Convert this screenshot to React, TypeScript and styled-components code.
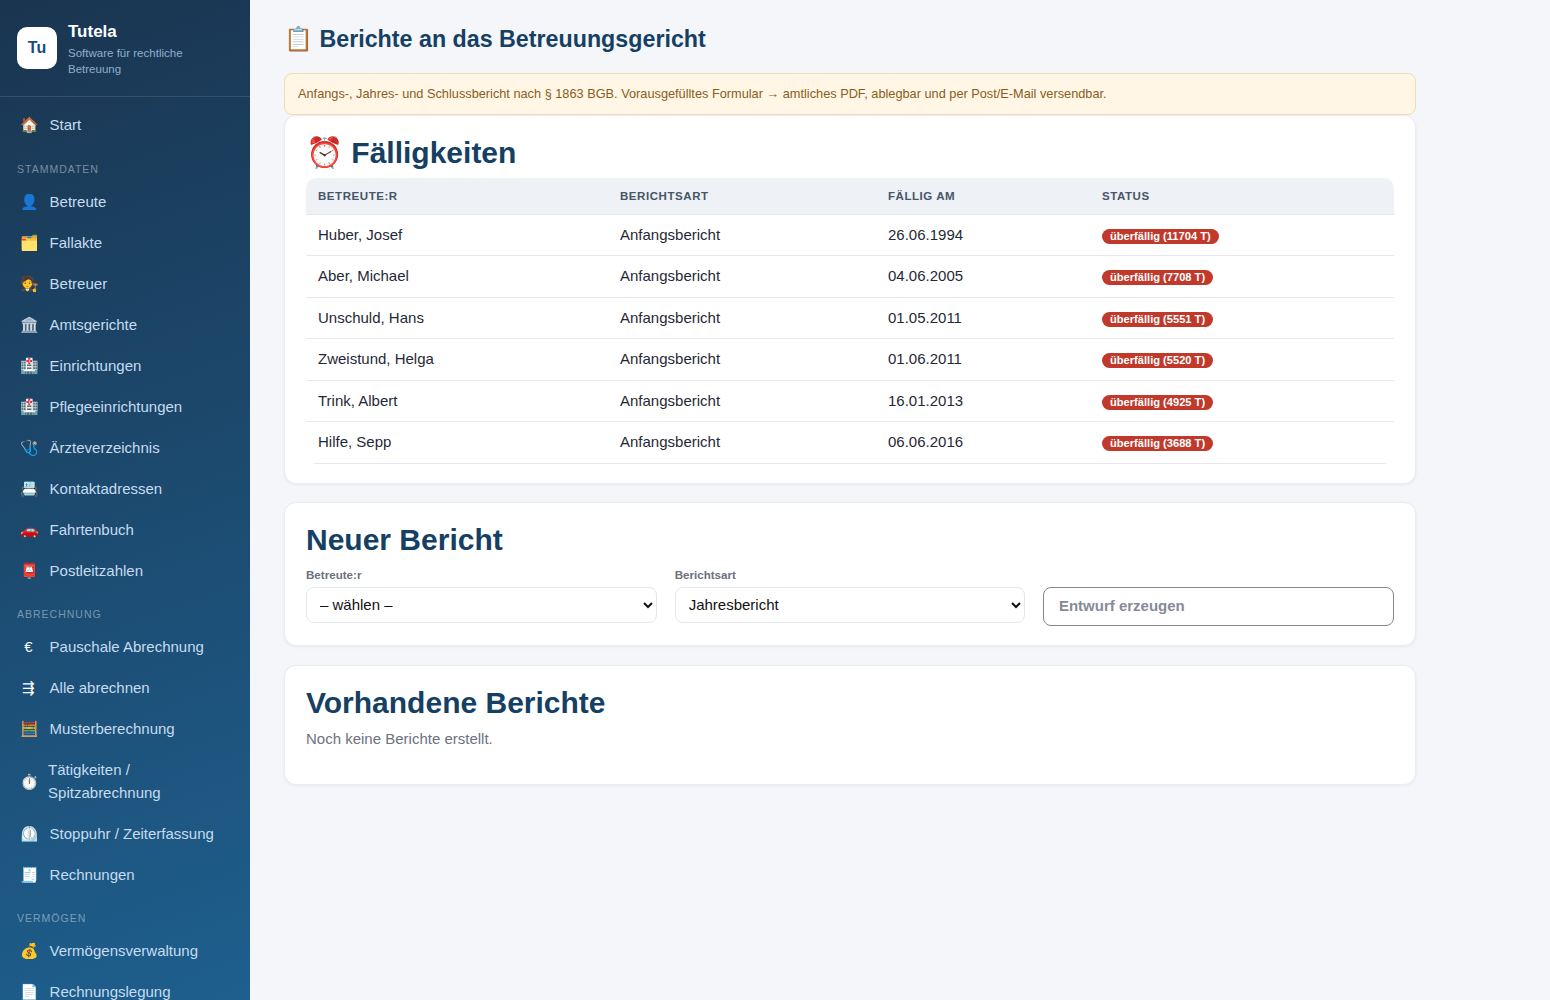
import styled, { createGlobalStyle } from 'styled-components';

const GlobalStyle = createGlobalStyle`
	* {
		box-sizing: border-box;
	}
	html, body {
		margin: 0;
		height: 100%;
		overflow: hidden;
	}
	body {
		font-family: 'Liberation Sans', Arial, sans-serif;
		font-size: 15px;
		line-height: 1.5;
		background: #f4f6fa;
		color: #1f2937;
	}
`;

type NavEntry = { icon: string; label: string };
type NavGroup = { title?: string; items: NavEntry[] };

const navGroups: NavGroup[] = [
	{ items: [{ icon: '🏠', label: 'Start' }] },
	{
		title: 'Stammdaten',
		items: [
			{ icon: '👤', label: 'Betreute' },
			{ icon: '🗂️', label: 'Fallakte' },
			{ icon: '🧑‍⚖️', label: 'Betreuer' },
			{ icon: '🏛️', label: 'Amtsgerichte' },
			{ icon: '🏥', label: 'Einrichtungen' },
			{ icon: '🏥', label: 'Pflegeeinrichtungen' },
			{ icon: '🩺', label: 'Ärzteverzeichnis' },
			{ icon: '📇', label: 'Kontaktadressen' },
			{ icon: '🚗', label: 'Fahrtenbuch' },
			{ icon: '📮', label: 'Postleitzahlen' },
		],
	},
	{
		title: 'Abrechnung',
		items: [
			{ icon: '€', label: 'Pauschale Abrechnung' },
			{ icon: '⇶', label: 'Alle abrechnen' },
			{ icon: '🧮', label: 'Musterberechnung' },
			{ icon: '⏱️', label: 'Tätigkeiten / Spitzabrechnung' },
			{ icon: '⏲️', label: 'Stoppuhr / Zeiterfassung' },
			{ icon: '🧾', label: 'Rechnungen' },
		],
	},
	{
		title: 'Vermögen',
		items: [
			{ icon: '💰', label: 'Vermögensverwaltung' },
			{ icon: '📄', label: 'Rechnungslegung' },
		],
	},
];

const dueRows = [
	{ name: 'Huber, Josef', date: '26.06.1994', days: 11704 },
	{ name: 'Aber, Michael', date: '04.06.2005', days: 7708 },
	{ name: 'Unschuld, Hans', date: '01.05.2011', days: 5551 },
	{ name: 'Zweistund, Helga', date: '01.06.2011', days: 5520 },
	{ name: 'Trink, Albert', date: '16.01.2013', days: 4925 },
	{ name: 'Hilfe, Sepp', date: '06.06.2016', days: 3688 },
];

export default function App() {
	return (
		<>
			<GlobalStyle />
			<Layout>
				<Sidebar>
					<Brand>
						<BrandLogo>Tu</BrandLogo>
						<BrandText>
							<BrandName>Tutela</BrandName>
							<BrandSub>Software für rechtliche Betreuung</BrandSub>
						</BrandText>
					</Brand>
					<Nav>
						{navGroups.map((group, i) => (
							<div key={i}>
								{group.title && <NavTitle>{group.title}</NavTitle>}
								{group.items.map((item) => (
									<NavItem key={item.label}>
										<NavIcon>{item.icon}</NavIcon>
										<span>{item.label}</span>
									</NavItem>
								))}
							</div>
						))}
					</Nav>
				</Sidebar>

				<Main>
					<PageTitle>📋 Berichte an das Betreuungsgericht</PageTitle>
					<Notice>
						Anfangs-, Jahres- und Schlussbericht nach § 1863 BGB. Vorausgefülltes
						Formular → amtliches PDF, ablegbar und per Post/E-Mail versendbar.
					</Notice>

					<DueCard>
						<CardTitle>⏰ Fälligkeiten</CardTitle>
						<TableWrap>
							<DueTable>
								<colgroup>
									<col width="302" />
									<col width="268" />
									<col width="214" />
									<col width="304" />
								</colgroup>
								<thead>
									<tr>
										<th>Betreute:r</th>
										<th>Berichtsart</th>
										<th>Fällig am</th>
										<th>Status</th>
									</tr>
								</thead>
								<tbody>
									{dueRows.map((row) => (
										<tr key={row.name}>
											<td>{row.name}</td>
											<td>Anfangsbericht</td>
											<td>{row.date}</td>
											<td>
												<Badge>überfällig ({row.days} T)</Badge>
											</td>
										</tr>
									))}
								</tbody>
							</DueTable>
						</TableWrap>
					</DueCard>

					<FormCard>
						<CardTitle>Neuer Bericht</CardTitle>
						<FormGrid>
							<Field>
								<FieldLabel>Betreute:r</FieldLabel>
								<Select defaultValue="">
									<option value="">– wählen –</option>
								</Select>
							</Field>
							<Field>
								<FieldLabel>Berichtsart</FieldLabel>
								<Select defaultValue="jahr">
									<option value="anfang">Anfangsbericht</option>
									<option value="jahr">Jahresbericht</option>
									<option value="schluss">Schlussbericht</option>
								</Select>
							</Field>
							<SubmitButton type="button">Entwurf erzeugen</SubmitButton>
						</FormGrid>
					</FormCard>

					<EmptyCard>
						<CardTitle>Vorhandene Berichte</CardTitle>
						<Muted>Noch keine Berichte erstellt.</Muted>
					</EmptyCard>
				</Main>
			</Layout>
		</>
	);
}

const Layout = styled.div`
	display: flex;
	height: 100vh;
	overflow: hidden;
`;

const Sidebar = styled.aside`
	flex: 0 0 250px;
	width: 250px;
	height: 100%;
	overflow: hidden;
	background: linear-gradient(160deg, #1a3550 0%, #1e5f8e 100%);
`;

const Brand = styled.div`
	display: flex;
	align-items: center;
	gap: 11px;
	height: 97px;
	padding: 0 17px;
	border-bottom: 1px solid rgba(255, 255, 255, 0.12);
`;

const BrandLogo = styled.div`
	flex: 0 0 40px;
	height: 42px;
	display: flex;
	align-items: center;
	justify-content: center;
	border-radius: 10px;
	background: #fff;
	color: #1a4d7a;
	font-size: 16px;
	font-weight: 700;
`;

const BrandText = styled.div`
	display: flex;
	flex-direction: column;
	margin-top: 2px;
`;

const BrandName = styled.div`
	color: #fff;
	font-size: 17px;
	font-weight: 700;
	line-height: 22px;
	margin-bottom: 2px;
`;

const BrandSub = styled.div`
	max-width: 130px;
	color: #8fb0cc;
	font-size: 11.52px;
	line-height: 16px;
`;

const Nav = styled.nav`
	padding: 8px 8px 0;
`;

const NavTitle = styled.div`
	padding: 14.5px 9px 5px;
	color: rgba(255, 255, 255, 0.42);
	font-size: 10.5px;
	line-height: 16px;
	letter-spacing: 1px;
	text-transform: uppercase;
`;

const NavItem = styled.div`
	display: flex;
	align-items: center;
	gap: 12.6px;
	padding: 9.25px 13px 9.25px 12px;
	color: #c6dcf0;
	font-size: 15px;
	line-height: 22.5px;
`;

const NavIcon = styled.span`
	width: 17px;
	min-width: 0;
	text-align: center;
	font-size: 15px;
	color: #fff;
`;

const Main = styled.main`
	flex: 1;
	min-width: 0;
	padding: 22px 134px 0 34px;
`;

const PageTitle = styled.h1`
	margin: 0 0 17px;
	color: #153f63;
	font-size: 23.25px;
	line-height: 34px;
	font-weight: 700;
`;

const Notice = styled.div`
	padding: 10px 13px;
	border: 1px solid #f2dcb3;
	border-radius: 8px;
	background: #fff6e6;
	color: #8a5d1a;
	font-size: 12.75px;
	line-height: 20px;
`;

const Card = styled.section`
	margin-bottom: 19px;
	padding: 19px 21px 0;
	border: 1px solid #e8ecf3;
	border-radius: 12px;
	background: #fff;
	box-shadow: 0 1px 3px rgba(20, 40, 70, 0.06);
`;

const DueCard = styled(Card)`
	height: 368.5px;
	margin-bottom: 18.9px;
`;

const FormCard = styled(Card)`
	margin-bottom: 19.4px;
	padding-bottom: 18.8px;
`;

const EmptyCard = styled(Card)`
	height: 120px;
`;

const CardTitle = styled.h2`
	margin: 0 0 7px;
	color: #153f63;
	font-size: 30px;
	line-height: 36px;
	font-weight: 700;
`;

const TableWrap = styled.div`
	overflow: hidden;
	border-radius: 10px;
`;

const DueTable = styled.table`
	width: 100%;
	table-layout: fixed;
	border-collapse: separate;
	border-spacing: 0;

	th {
		padding: 9.5px 12px 8.5px;
		background: #eef1f6;
		border-bottom: 1px solid #e2e6ed;
		color: #475569;
		font-size: 11.52px;
		font-weight: 700;
		line-height: 17.5px;
		letter-spacing: 0.55px;
		text-align: left;
		text-transform: uppercase;
	}
	td {
		padding: 9px 12px;
		border-bottom: 1px solid #e5e8ef;
		color: #1f2937;
		font-size: 15px;
		line-height: 22.5px;
	}
`;

const Badge = styled.span`
	display: inline-block;
	padding: 0 8px;
	border-radius: 999px;
	background: #c0392b;
	color: #fff;
	font-size: 11.12px;
	font-weight: 700;
	line-height: 15px;
`;

const FormGrid = styled.div`
	display: grid;
	grid-template-columns: repeat(3, 1fr);
	gap: 18px;
	align-items: end;
	margin-top: 8.6px;
`;

const Field = styled.label`
	display: flex;
	flex-direction: column;
	gap: 5px;
`;

const FieldLabel = styled.span`
	color: #6b7280;
	font-size: 11.6px;
	font-weight: 700;
	line-height: 15px;
`;

const Select = styled.select`
	height: 36px;
	margin-bottom: 3px;
	padding: 0 9px;
	border: 1px solid #e5e7ef;
	border-radius: 8px;
	background: #fff;
	color: #111;
	font-family: inherit;
	font-size: 15px;
`;

const SubmitButton = styled.button`
	height: 39px;
	padding: 0 14.6px 2px;
	border: 1px solid #85858a;
	border-radius: 8px;
	background: #fff;
	color: #858b96;
	font-family: inherit;
	font-size: 15px;
	font-weight: 700;
	text-align: left;
`;

const Muted = styled.div`
	color: #6b7280;
	font-size: 15px;
	line-height: 22.5px;
`;
